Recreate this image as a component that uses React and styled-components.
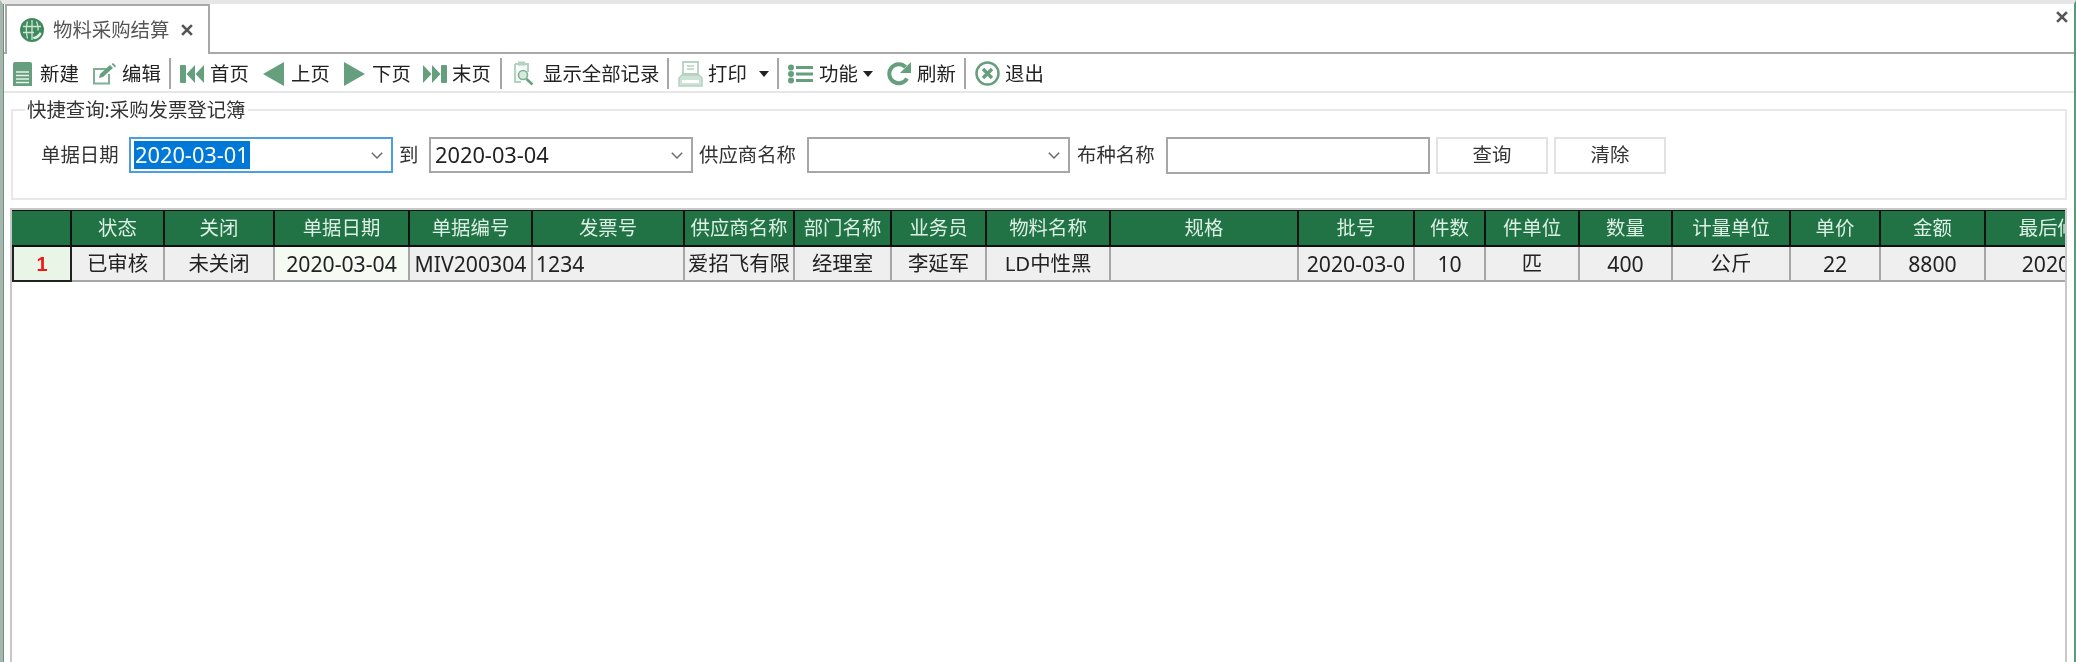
import React from 'react';
import styled, { createGlobalStyle } from 'styled-components';

const Global = createGlobalStyle`
  html, body { margin: 0; padding: 0; height: 100%; overflow: hidden; background: #fff; }
  body { font-family: "Noto Sans", "Noto Sans CJK SC", sans-serif; font-size: 19.4px; color: #222; }
  * { box-sizing: border-box; }
`;

const Frame = styled.div`
  width: 2076px; height: 662px; display: flex; flex-direction: column;
  border-top: 4px solid #e6e6e6; border-left: 3px solid #adb3af; border-right: 2px solid #5b9a78; padding-left: 1px;
  box-shadow: inset 1px 0 0 #5b9a78;
  background: #fff; filter: blur(0.4px);
`;
const TabStrip = styled.div`
  height: 50px; flex: none; display: flex; border-bottom: 2px solid #a8a8a8; position: relative; padding-left: 1px;
`;
const Tab = styled.div`
  width: 205px; height: 50px; border: 2px solid #a8a8a8; border-bottom: none; background: #fff;
  display: flex; align-items: center; padding-left: 13px; color: #555; margin-top: 0;
`;
const TabLabel = styled.span` margin-left: 9px; line-height: 1; `;
const TabClose = styled.span` margin-left: 12px; display: flex; `;
const StripClose = styled.span` position: absolute; right: 6px; top: 7px; display: flex; `;

const Toolbar = styled.div`
  height: 39px; flex: none; display: flex; align-items: center; padding: 2px 0 0 9px; border-bottom: 2px solid #e6e6e6;
`;
const Tool = styled.div`
  width: ${p => p.$w}px; flex: none; display: flex; align-items: center; gap: ${p => p.$gap}px; white-space: nowrap; line-height: 1;
`;
const Sep = styled.div`
  width: 2px; height: 31px; flex: none; background: #a6a6a6; margin-right: ${p => p.$after}px;
`;
const Caret = styled.span`
  width: 0; height: 0; border-left: 5.5px solid transparent; border-right: 5.5px solid transparent; border-top: 6px solid #222;
  margin-left: ${p => p.$left}px;
`;

const Body = styled.div`
  flex: 1; min-height: 0; display: flex; flex-direction: column; padding: 7px 7px 0 7px;
`;
const Query = styled.fieldset`
  margin: 0; height: 100px; flex: none; border: 2px solid #e8e8e8; padding: 0; display: flex;
`;
const Legend = styled.legend`
  margin-left: 12px; padding: 0 2px; line-height: 20px; color: #333;
`;
const QueryRow = styled.div`
  display: flex; align-items: center; height: 38px; margin-top: 16px; padding-left: 28px; width: 100%;
`;
const FieldLabel = styled.label`
  width: ${p => p.$w}px; flex: none; margin-left: ${p => p.$ml || 0}px; white-space: nowrap; color: #333; line-height: 1;
`;
const Combo = styled.div`
  width: ${p => p.$w}px; height: 36px; flex: none; display: flex; align-items: center; justify-content: space-between;
  border: 2px solid ${p => (p.$active ? '#4d9de6' : '#a6a6a6')}; padding: 0 8px 0 3px; background: #fff; font-size: 21.8px; line-height: 1;
`;
const Selected = styled.span` background: #0078d7; color: #fff; height: 28px; display: flex; align-items: center; padding: 0 1px; `;
const Plain = styled.span` padding: 0 1px; color: #222; `;
const TextBox = styled.div`
  width: 264px; height: 37px; flex: none; border: 2px solid #a6a6a6; background: #fff;
`;
const QueryButton = styled.button`
  width: 112px; height: 37px; flex: none; margin-left: ${p => p.$ml}px; border: 2px solid #e2e2e2; background: #fff; color: #333;
  font: inherit; line-height: 1; padding: 0;
`;

const GridWrap = styled.div`
  flex: 1; min-height: 0; margin: 8px 0 0 -1px; border: 2px solid #c8c8c8; border-bottom: none; overflow: hidden;
  width: 2057px;
`;
const GRID = '60px 93px 110px 135px 123px 152px 110px 97px 95px 124px 188px 116px 71px 94px 93px 118px 90px 105px 184px';
const HeadRow = styled.div`
  display: grid; grid-template-columns: ${GRID}; height: 37px; background: #217346; border-top: 1px solid #111; border-bottom: 2px solid #111; width: max-content;
`;
const HeadCell = styled.div`
  display: flex; align-items: center; justify-content: center; color: #dcefe4; white-space: nowrap; border-right: 2px solid #111; line-height: 1; overflow: hidden;
`;
const DataRow = styled.div`
  display: grid; grid-template-columns: ${GRID}; height: 35px; background: #efefef; border-bottom: 2px solid #a6a6a6; width: max-content;
`;
const DataCell = styled.div`
  display: flex; align-items: center; justify-content: ${p => (p.$left ? 'flex-start' : 'center')}; padding-left: ${p => (p.$left ? '3px' : 0)};
  background: ${p => (p.$hl ? '#f5fbf3' : 'transparent')}; border-right: 2px solid #a6a6a6; white-space: nowrap; color: #222; line-height: 1; overflow: hidden;
  font-size: ${p => (p.$num ? '21.2px' : '20.4px')};
`;
const IndexCell = styled.div`
  display: flex; align-items: center; justify-content: center; background: #e9f5e6; border: 2px solid #222; border-top: none; margin-bottom: -2px;
  color: #f01818; font-weight: 700; font-family: "Liberation Sans", sans-serif; font-size: 20px; line-height: 1;
`;

const G = '#659f7e';
const L = '#b4d2c0';
const Svg = ({ w, h, children, vb }) => <svg width={w} height={h} viewBox={vb || `0 0 ${w} ${h}`} style={{ flex: 'none', display: 'block' }}>{children}</svg>;

const Globe = () => (
  <Svg w={24} h={24}>
    <circle cx="12" cy="12" r="12" fill="#3f8a5e" />
    <path d="M12 2v20M3 8.500h18M3 14.500h11M7.500 3.500c-1.500 5-1.500 11 0 17M16.500 3.500c1.500 3 1.800 6 1.600 9" stroke="#cfe3d6" strokeWidth="1.300" fill="none" />
    <path d="M13 19c3-.5 5-2 7-5l1.500 2c-2 3.500-5 5.500-8 5z" fill="#e6f1ea" />
  </Svg>
);
const CloseX = ({ size = 11 }) => (
  <Svg w={size} h={size} vb="0 0 11 11"><path d="M1 1l9 9M10 1l-9 9" stroke="#555" strokeWidth="2.400" /></Svg>
);
const IconNew = () => (
  <Svg w={19} h={24}>
    <path d="M0 2a2 2 0 0 1 2-2h15a2 2 0 0 1 2 2v22H0z" fill={G} />
    <path d="M3 10h13M3 13.500h13M3 17h13M3 20.500h13" stroke="#e8f2ec" strokeWidth="1.400" />
  </Svg>
);
const IconEdit = () => (
  <Svg w={24} h={22}>
    <path d="M15 6H2v14.500h15V11" fill="none" stroke="#7fb096" strokeWidth="2" />
    <path d="M7 15l1-4L18 2l3 3-10 9z" fill={G} />
    <path d="M19.500 1l1.500-1 3 3-1 1.500z" fill={G} />
  </Svg>
);
const IconFirst = () => (
  <Svg w={24} h={18}>
    <rect x="0" y="0" width="6" height="18" rx="1" fill={G} />
    <path d="M15 0v18L6.500 9zM24 0v18L15.500 9z" fill={G} />
  </Svg>
);
const IconPrev = () => <Svg w={21} h={24}><path d="M21 0v24L0 12z" fill={G} /></Svg>;
const IconNext = () => <Svg w={21} h={24}><path d="M0 0v24l21-12z" fill={G} /></Svg>;
const IconLast = () => (
  <Svg w={24} h={18}>
    <rect x="18" y="0" width="6" height="18" rx="1" fill={G} />
    <path d="M0 0v18l8.500-9zM9 0v18l8.500-9z" fill={G} />
  </Svg>
);
const IconFind = () => (
  <Svg w={21} h={25}>
    <path d="M2 3h13v8M8 21H2V3" fill="#f1f7f3" stroke={L} strokeWidth="2" />
    <rect x="5" y="0.500" width="7" height="4" fill={L} />
    <circle cx="10" cy="14" r="4.500" fill="#d9e9df" stroke="#7fb096" strokeWidth="1.600" />
    <path d="M13.500 18l6 5.500" stroke={G} strokeWidth="2.500" />
  </Svg>
);
const IconPrint = () => (
  <Svg w={25} h={26}>
    <path d="M5 1h15v12H5z" fill="#fff" stroke={L} strokeWidth="1.800" />
    <path d="M9 5h7M9 8h7" stroke={L} strokeWidth="1.300" />
    <path d="M4 14h17l3 3v8H1v-8z" fill="#cfe2d6" stroke={L} strokeWidth="1.500" />
    <path d="M4 19h17v3H4z" fill="#fff" />
  </Svg>
);
const IconList = () => (
  <Svg w={25} h={20}>
    <circle cx="3" cy="3.500" r="3" fill={G} /><circle cx="3" cy="10" r="3" fill={G} /><circle cx="3" cy="16.500" r="3" fill={G} />
    <path d="M8 3.500h17M8 10h17M8 16.500h17" stroke={G} strokeWidth="3.200" />
  </Svg>
);
const IconRefresh = () => (
  <Svg w={25} h={25}>
    <path d="M20 17.500A9.500 9.500 0 1 1 18.500 6" fill="none" stroke={G} strokeWidth="4" />
    <path d="M24 1v11H13z" fill={G} />
  </Svg>
);
const IconExit = () => (
  <Svg w={25} h={25}>
    <circle cx="12.500" cy="12.500" r="11" fill="none" stroke={G} strokeWidth="2.500" />
    <path d="M8 8l9 9M17 8l-9 9" stroke={G} strokeWidth="3.400" />
  </Svg>
);
const Chevron = () => (
  <Svg w={12} h={7}><path d="M0.800 0.800L6 6l5.200-5.200" fill="none" stroke="#666" strokeWidth="1.400" /></Svg>
);

const tools = [
  { w: 79, gap: 8, icon: <IconNew />, label: '新建' },
  { w: 77, gap: 6, icon: <IconEdit />, label: '编辑' },
  { sep: 9 },
  { w: 83, gap: 6, icon: <IconFirst />, label: '首页' },
  { w: 81, gap: 7, icon: <IconPrev />, label: '上页' },
  { w: 79, gap: 7, icon: <IconNext />, label: '下页' },
  { w: 77, gap: 5, icon: <IconLast />, label: '末页' },
  { sep: 11 },
  { w: 154, gap: 9, icon: <IconFind />, label: '显示全部记录' },
  { sep: 9 },
  { w: 99, gap: 5, icon: <IconPrint />, label: '打印', caret: 7 },
  { sep: 9 },
  { w: 99, gap: 6, icon: <IconList />, label: '功能', caret: -1 },
  { w: 77, gap: 5, icon: <IconRefresh />, label: '刷新' },
  { sep: 9 },
  { w: 80, gap: 5, icon: <IconExit />, label: '退出' },
];

const heads = ['', '状态', '关闭', '单据日期', '单据编号', '发票号', '供应商名称', '部门名称', '业务员', '物料名称', '规格', '批号', '件数', '件单位', '数量', '计量单位', '单价', '金额', '最后修改日期'];
const cells = [
  { t: '已审核' }, { t: '未关闭' }, { t: '2020-03-04', hl: true, num: true }, { t: 'MIV200304', num: true }, { t: '1234', left: true, num: true },
  { t: '爱招飞有限' }, { t: '经理室' }, { t: '李延军' }, { t: 'LD中性黑' }, { t: '' }, { t: '2020-03-0', num: true },
  { t: '10', num: true }, { t: '匹' }, { t: '400', num: true }, { t: '公斤' }, { t: '22', num: true }, { t: '8800', num: true }, { t: '2020-03-04', num: true },
];

export default function App() {
  return (
    <>
      <Global />
      <Frame>
        <TabStrip>
          <Tab>
            <Globe />
            <TabLabel>物料采购结算</TabLabel>
            <TabClose><CloseX size={12} /></TabClose>
          </Tab>
          <StripClose><CloseX size={12} /></StripClose>
        </TabStrip>
        <Toolbar>
          {tools.map((t, i) =>
            t.sep ? <Sep key={i} $after={t.sep} /> : (
              <Tool key={i} $w={t.w} $gap={t.gap}>
                {t.icon}
                <span>{t.label}</span>
                {t.caret !== undefined && <Caret $left={t.caret} />}
              </Tool>
            )
          )}
        </Toolbar>
        <Body>
          <Query>
            <Legend>快捷查询:采购发票登记簿</Legend>
            <QueryRow>
              <FieldLabel $w={88}>单据日期</FieldLabel>
              <Combo $w={264} $active><Selected>2020-03-01</Selected><Chevron /></Combo>
              <FieldLabel $w={30} $ml={6}>到</FieldLabel>
              <Combo $w={264}><Plain>2020-03-04</Plain><Chevron /></Combo>
              <FieldLabel $w={108} $ml={6}>供应商名称</FieldLabel>
              <Combo $w={263}><span /><Chevron /></Combo>
              <FieldLabel $w={89} $ml={7}>布种名称</FieldLabel>
              <TextBox />
              <QueryButton $ml={6}>查询</QueryButton>
              <QueryButton $ml={6}>清除</QueryButton>
            </QueryRow>
          </Query>
          <GridWrap>
            <HeadRow>
              {heads.map((h, i) => <HeadCell key={i}>{h}</HeadCell>)}
            </HeadRow>
            <DataRow>
              <IndexCell>1</IndexCell>
              {cells.map((c, i) => <DataCell key={i} $hl={c.hl} $left={c.left} $num={c.num}>{c.t}</DataCell>)}
            </DataRow>
          </GridWrap>
        </Body>
      </Frame>
    </>
  );
}
